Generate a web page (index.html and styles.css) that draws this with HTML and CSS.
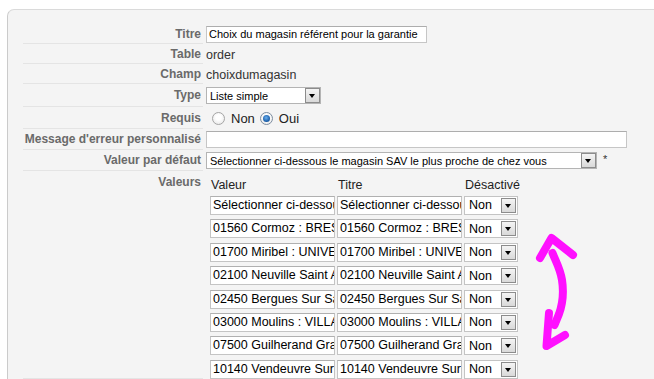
FILE: index.html
```html
<!DOCTYPE html>
<html lang="fr">
<head>
<meta charset="utf-8">
<title>Champ</title>
<link rel="stylesheet" href="styles.css">
</head>
<body>
<div class="panel">
  <div class="form">
    <div class="lbl">Titre</div>
    <div class="val"><div class="txt w-titre">Choix du magasin référent pour la garantie</div></div>

    <div class="lbl">Table</div>
    <div class="val plain">order</div>

    <div class="lbl">Champ</div>
    <div class="val plain">choixdumagasin</div>

    <div class="lbl">Type</div>
    <div class="val"><div class="sel w-type"><span class="sel-text">Liste simple</span><span class="btn"></span></div></div>

    <div class="lbl">Requis</div>
    <div class="val radios">
      <span class="radio"></span><span class="rlabel">Non</span>
      <span class="radio on"></span><span class="rlabel">Oui</span>
    </div>

    <div class="lbl">Message d'erreur personnalisé</div>
    <div class="val"><div class="txt w-msg"></div></div>

    <div class="lbl">Valeur par défaut</div>
    <div class="val"><div class="sel w-def"><span class="sel-text">Sélectionner ci-dessous le magasin SAV le plus proche de chez vous</span><span class="btn"></span></div><span class="star">*</span></div>

    <div class="lbl top">Valeurs</div>
    <div class="val values">
      <div class="vgrid">
        <div class="vh">Valeur</div><div class="vh">Titre</div><div class="vh">Désactivé</div>

        <div class="cell">Sélectionner ci-dessou</div><div class="cell">Sélectionner ci-dessou</div><div class="rsel"><span class="rtext">Non</span><span class="btn"></span></div>
        <div class="cell">01560 Cormoz : BRES</div><div class="cell">01560 Cormoz : BRES</div><div class="rsel"><span class="rtext">Non</span><span class="btn"></span></div>
        <div class="cell">01700 Miribel : UNIVE</div><div class="cell">01700 Miribel : UNIVE</div><div class="rsel"><span class="rtext">Non</span><span class="btn"></span></div>
        <div class="cell">02100 Neuville Saint A</div><div class="cell">02100 Neuville Saint A</div><div class="rsel"><span class="rtext">Non</span><span class="btn"></span></div>
        <div class="cell">02450 Bergues Sur Sa</div><div class="cell">02450 Bergues Sur Sa</div><div class="rsel"><span class="rtext">Non</span><span class="btn"></span></div>
        <div class="cell">03000 Moulins : VILLA</div><div class="cell">03000 Moulins : VILLA</div><div class="rsel"><span class="rtext">Non</span><span class="btn"></span></div>
        <div class="cell">07500 Guilherand Gra</div><div class="cell">07500 Guilherand Gra</div><div class="rsel"><span class="rtext">Non</span><span class="btn"></span></div>
        <div class="cell">10140 Vendeuvre Sur</div><div class="cell">10140 Vendeuvre Sur</div><div class="rsel"><span class="rtext">Non</span><span class="btn"></span></div>
      </div>
    </div>
  </div>
</div>
<svg class="annot" width="654" height="379" viewBox="0 0 654 379" aria-hidden="true">
  <g fill="none" stroke="#ff10ff" stroke-width="8" stroke-linecap="round" stroke-linejoin="round">
    <path d="M540,258 L551.5,238 L573,255"/>
    <path d="M552.5,253 C556,262 560,268 562,280 C564,293 563,303 559,314 L554.5,325"/>
    <path d="M549,313 L546.5,346 L565,335"/>
  </g>
</svg>
</body>
</html>
```

FILE: styles.css
```css
html, body {
  margin: 0;
  padding: 0;
  background: #ffffff;
  font-family: "Liberation Sans", Arial, sans-serif;
  overflow: hidden;
}

.panel {
  margin: 9px 0 0 7px;
  border-top: 1px solid #dadada;
  border-left: 1px solid #cbcbcb;
  border-top-left-radius: 7px;
  background: #f4f4f4;
  padding: 14px 0 0 15px;
  height: 420px;
}

.form {
  display: grid;
  grid-template-columns: 180px 1fr;
  grid-template-rows: 20px 20px 20px 23px 22px 21px 21px auto;
}

.lbl {
  box-sizing: border-box;
  border-bottom: 1px solid #e4e4e4;
  text-align: right;
  padding-right: 2px;
  font-size: 12px;
  font-weight: bold;
  color: #6a6a6a;
  display: flex;
  align-items: center;
  justify-content: flex-end;
  white-space: nowrap;
}

.lbl.top {
  align-items: flex-start;
  padding-top: 4px;
}

.val {
  padding-left: 3px;
  display: flex;
  align-items: center;
  box-sizing: border-box;
}

.plain {
  font-size: 12.5px;
  color: #333333;
  padding-top: 1px;
}

.txt {
  box-sizing: border-box;
  height: 17px;
  background: #ffffff;
  border: 1px solid #c6c6c6;
  border-top-color: #adadad;
  font-size: 11px;
  line-height: 15px;
  padding-left: 2px;
  color: #000;
  white-space: nowrap;
  overflow: hidden;
}

.w-titre { width: 221px; }
.w-msg { width: 421px; }

.sel {
  box-sizing: border-box;
  height: 17px;
  background: #ffffff;
  border: 1px solid #b4b4b4;
  display: flex;
  align-items: center;
  justify-content: space-between;
  font-size: 11px;
  color: #000;
  padding-left: 3px;
  white-space: nowrap;
}

.w-type { width: 115px; }
.w-def { width: 391px; }

.btn {
  box-sizing: border-box;
  width: 15px;
  height: 15px;
  border: 1px solid #8c8c8c;
  background: linear-gradient(#f4f4f4, #d9d9d9);
  position: relative;
  flex: none;
}

.btn::after {
  content: "";
  position: absolute;
  left: 3px;
  top: 5px;
  border-left: 3.5px solid transparent;
  border-right: 3.5px solid transparent;
  border-top: 4px solid #000;
}

.star {
  font-size: 11px;
  color: #333;
  margin-left: 6px;
  align-self: flex-start;
  margin-top: 3px;
}

.radios {
  font-size: 13px;
  color: #222;
  padding-left: 9px;
  padding-top: 1px;
}

.radio {
  box-sizing: border-box;
  width: 13px;
  height: 13px;
  border-radius: 50%;
  border: 1px solid #a5a5a5;
  background: radial-gradient(circle at 50% 40%, #ffffff 30%, #e2e2e2 100%);
  position: relative;
  flex: none;
}

.radio.on {
  border-color: #7c8da0;
}

.radio.on::after {
  content: "";
  position: absolute;
  left: 2px;
  top: 2px;
  width: 7px;
  height: 7px;
  border-radius: 50%;
  background: radial-gradient(circle at 45% 40%, #6ab0f0 0%, #1b5ea8 65%, #103f78 100%);
}

.rlabel {
  margin-left: 6px;
  margin-right: 5px;
}

.values {
  align-items: flex-start;
  padding-left: 7px;
  padding-top: 4px;
}

.vgrid {
  display: grid;
  grid-template-columns: 125px 125px 54px;
  column-gap: 2px;
  row-gap: 4.4px;
  grid-template-rows: 16.6px;
  grid-auto-rows: 19px;
}

.vh {
  font-size: 12.5px;
  color: #222;
  line-height: 20px;
  height: 16.6px;
  padding-left: 1px;
}

.cell {
  box-sizing: border-box;
  height: 19px;
  background: #ffffff;
  border: 1px solid #c4c4c4;
  border-top-color: #b0b0b0;
  font-size: 12.5px;
  line-height: 17px;
  padding-left: 2px;
  color: #000;
  white-space: nowrap;
  overflow: hidden;
}

.rsel {
  box-sizing: border-box;
  height: 19px;
  background: #ffffff;
  border: 1px solid #c4c4c4;
  display: flex;
  align-items: center;
  padding-left: 4px;
  padding-right: 1px;
  font-size: 12.5px;
  color: #000;
}

.rtext {
  flex: 1;
}

.annot {
  position: absolute;
  left: 0;
  top: 0;
  pointer-events: none;
}
```
